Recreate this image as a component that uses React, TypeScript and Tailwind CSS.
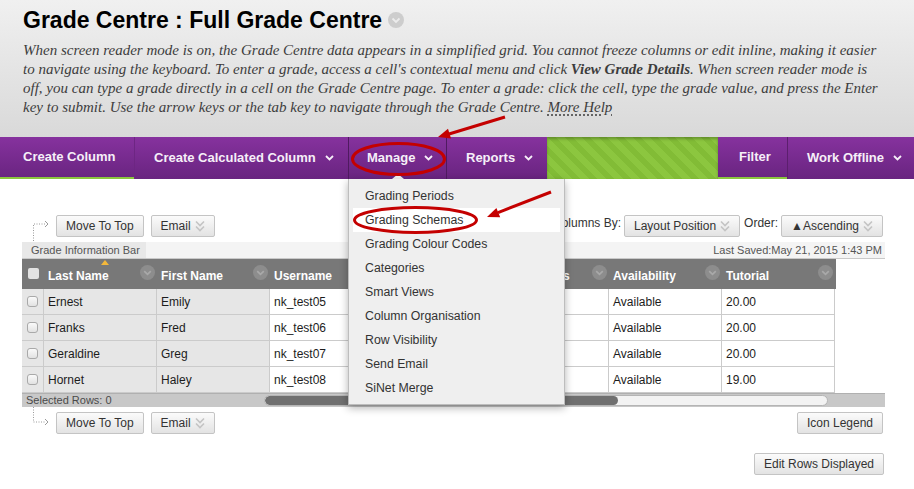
import React from "react";

const Chevron = () => (
  <svg width="9" height="6" viewBox="0 0 9 6" className="ml-[9px] shrink-0">
    <path d="M1 1l3.5 3.5L8 1" stroke="currentColor" strokeWidth="1.8" fill="none" />
  </svg>
);

const DoubleChevron = () => (
  <svg width="10" height="12" viewBox="0 0 10 12" className="shrink-0">
    <path d="M1 1.5l4 4 4-4M1 6.5l4 4 4-4" stroke="#c4c4c4" strokeWidth="1.6" fill="none" />
  </svg>
);

const CircleChevron = ({ bg, stroke, size = 15 }: { bg: string; stroke: string; size?: number }) => (
  <svg width={size} height={size} viewBox="0 0 16 16" className="shrink-0">
    <circle cx="8" cy="8" r="8" fill={bg} />
    <path d="M4.5 6.5L8 10l3.5-3.5" stroke={stroke} strokeWidth="1.8" fill="none" />
  </svg>
);

const Button = ({ label, menu }: { label: string; menu?: boolean }) => (
  <button className="h-[22px] flex items-center gap-[4px] px-[9px] border border-[#c4c4c4] rounded-[2px] bg-gradient-to-b from-[#fbfbfb] to-[#e3e3e3] text-[12px] text-[#333] leading-none">
    {label}
    {menu && <DoubleChevron />}
  </button>
);

// Student ID sits under the open menu, so its heading is left blank
const columns = ["Last Name", "First Name", "Username", "", "Last Access", "Availability", "Tutorial"];

const rows = [
  ["Ernest", "Emily", "nk_test05", "", "", "Available", "20.00"],
  ["Franks", "Fred", "nk_test06", "", "", "Available", "20.00"],
  ["Geraldine", "Greg", "nk_test07", "", "", "Available", "20.00"],
  ["Hornet", "Haley", "nk_test08", "", "", "Available", "19.00"],
];

const menuItems = [
  "Grading Periods",
  "Grading Schemas",
  "Grading Colour Codes",
  "Categories",
  "Smart Views",
  "Column Organisation",
  "Row Visibility",
  "Send Email",
  "SiNet Merge",
];

const Checkbox = ({ header }: { header?: boolean }) => (
  <div
    className={
      header
        ? "w-[11px] h-[11px] rounded-[2px] bg-[#e2e2e2]"
        : "w-[11px] h-[11px] rounded-[3px] border border-[#a9a9a9] bg-gradient-to-b from-[#fafafa] to-[#e2e2e2]"
    }
  />
);

const App: React.FC = () => {
  return (
    <div className="relative w-[914px] h-[489px] overflow-hidden bg-white font-['Liberation_Sans',Arial,sans-serif]">
      {/* page header */}
      <div className="h-[137px] px-[23px] pt-[7px] bg-gradient-to-b from-[#f0f0f0] to-[#d9d9d9]">
        <h1 className="flex items-center text-[23px] leading-[26px] font-bold text-black">
          Grade Centre : Full Grade Centre
          <span className="ml-[6px]">
            <CircleChevron bg="#cdcdcd" stroke="#ececec" size={16} />
          </span>
        </h1>
        <p className="mt-[8px] font-['Liberation_Serif','Times_New_Roman',serif] italic text-[15px] leading-[19px] text-[#3d3d3d] whitespace-nowrap">
          <span className="block">
            When screen reader mode is on, the Grade Centre data appears in a simplified grid. You cannot freeze columns or edit inline, making it easier
          </span>
          <span className="block">
            to navigate using the keyboard. To enter a grade, access a cell's contextual menu and click <b>View Grade Details</b>. When screen reader mode is
          </span>
          <span className="block">
            off, you can type a grade directly in a cell on the Grade Centre page. To enter a grade: click the cell, type the grade value, and press the Enter
          </span>
          <span className="block">
            key to submit. Use the arrow keys or the tab key to navigate through the Grade Centre.{" "}
            <span className="underline decoration-dotted underline-offset-[3px]">More Help</span>
          </span>
        </p>
      </div>

      {/* action bar */}
      <div className="relative z-10 flex h-[42px] bg-gradient-to-b from-[#86329e] to-[#692480] text-[13px] font-bold text-[#f6eff8]">
        <div className="w-[134px] flex items-center pl-[23px] border-b-2 border-[#8cc63f]">Create Column</div>
        <div className="w-[214px] flex items-center pl-[19px] border-l border-[#6d2683]">
          Create Calculated Column <Chevron />
        </div>
        <div className="relative w-[99px] flex items-center pl-[18px] border-l border-r border-[#4f1a60]">
          Manage <Chevron />
          <div className="absolute bottom-0 left-1/2 -translate-x-1/2 w-0 h-0 border-l-[6px] border-r-[6px] border-b-[5px] border-l-transparent border-r-transparent border-b-[#f2f2f2]" />
          <div className="absolute top-full left-[-1px] w-[217px] pt-[5px] pb-[4px] px-[4px] bg-[#efefef] border border-t-0 border-[#bdbdbd] shadow-[0_3px_8px_rgba(0,0,0,0.3)] font-normal">
            {menuItems.map((item) => (
              <div
                key={item}
                className={`h-[24px] flex items-center pl-[12px] text-[12.3px] text-[#333] ${item === "Grading Schemas" ? "bg-white" : ""}`}
              >
                {item}
              </div>
            ))}
          </div>
        </div>
        <div className="w-[100px] flex items-center pl-[19px]">
          Reports <Chevron />
        </div>
        <div className="w-[171px] bg-[repeating-linear-gradient(45deg,#8cc63f_0px,#8cc63f_6px,#82bc36_6px,#82bc36_12px)] shadow-[inset_0_2px_3px_rgba(0,0,0,0.25)]" />
        <div className="w-[69px] flex items-center pl-[21px] border-b-2 border-[#8cc63f]">Filter</div>
        <div className="w-[127px] flex items-center pl-[19px] border-l border-[#5c1f6e]">
          Work Offline <Chevron />
        </div>
      </div>

      {/* grade centre */}
      <div className="pl-[22px] pr-[29px]">
        <div className="mt-[36px] flex items-start justify-between">
          <div className="flex items-center">
            <svg width="18" height="22" viewBox="0 0 18 22" className="ml-[10px] mr-[6px] overflow-visible">
              <path d="M1.5 26V9H14" stroke="#9a9a9a" strokeWidth="1" strokeDasharray="1 1.5" fill="none" />
              <path d="M13 6l3 3-3 3" stroke="#9a9a9a" strokeWidth="1" fill="none" />
            </svg>
            <div className="flex gap-[7px]">
              <Button label="Move To Top" />
              <Button label="Email" menu />
            </div>
          </div>
          <div className="flex items-start mr-[2px] text-[12px] text-[#333]">
            <span className="leading-[16px] mr-[3px]">Sort Columns By:</span>
            <Button label="Layout Position" menu />
            <span className="leading-[16px] ml-[4px] mr-[3px]">Order:</span>
            <Button label="▲Ascending" menu />
          </div>
        </div>

        {/* grade information bar */}
        <div className="mt-[5px] flex h-[17px] border-b border-[#c9c9c9] text-[11px] text-[#555]">
          <div className="w-[124px] flex items-center pl-[9px] bg-[#e8e8e8]">Grade Information Bar</div>
          <div className="flex-1 flex items-center justify-end pr-[3px] bg-[#f4f4f4]">Last Saved:May 21, 2015 1:43 PM</div>
        </div>

        {/* table */}
        <div className="w-[814px]">
          <div className="grid grid-cols-[22px_repeat(7,113px)] h-[30px] bg-[#787878] text-[12px] font-bold text-white">
            <div className="flex justify-center pt-[9px] pl-[1px]">
              <Checkbox header />
            </div>
            {columns.map((c, i) => (
              <div key={i} className="relative pl-[4px] pt-[9px] leading-[16px]">
                {c}
                {i === 0 && (
                  <div className="absolute top-[1px] left-[57px] w-0 h-0 border-l-[4px] border-r-[4px] border-b-[5px] border-l-transparent border-r-transparent border-b-[#f4b83a]" />
                )}
                <div className="absolute top-[6px] right-[2px]">
                  <CircleChevron bg="#8d8d8d" stroke="#a9a9a9" />
                </div>
              </div>
            ))}
          </div>
          {rows.map((r) => (
            <div key={r[0]} className="grid grid-cols-[22px_repeat(7,113px)] h-[26px] text-[12px] text-[#1c1c1c]">
              <div className="flex items-center justify-center bg-[#e6e6e6] border-b border-r border-[#cbcbcb]">
                <Checkbox />
              </div>
              {r.map((v, i) => (
                <div
                  key={i}
                  className={`flex items-center pl-[4px] border-b border-r border-[#cbcbcb] ${i < 2 ? "bg-[#e6e6e6]" : "bg-white"}`}
                >
                  {v}
                </div>
              ))}
            </div>
          ))}
        </div>

        {/* footer bar */}
        <div className="flex items-center h-[14px] bg-[#c8c8c8] border-t border-[#b0b0b0] text-[11px] text-[#4a4a4a]">
          <div className="w-[242px] pl-[4px] leading-none">Selected Rows: 0</div>
          <div className="flex w-[564px] h-[11px] rounded-full bg-[#f3f3f3] border border-[#b5b5b5] overflow-hidden">
            <div className="w-[353px] h-full rounded-full bg-[#707070]" />
          </div>
        </div>

        <div className="mt-[5px] flex items-start justify-between">
          <div className="flex items-center">
            <svg width="18" height="22" viewBox="0 0 18 22" className="ml-[10px] mr-[6px] overflow-visible">
              <path d="M1.5 -5V10H14" stroke="#9a9a9a" strokeWidth="1" strokeDasharray="1 1.5" fill="none" />
              <path d="M13 7l3 3-3 3" stroke="#9a9a9a" strokeWidth="1" fill="none" />
            </svg>
            <div className="flex gap-[7px]">
              <Button label="Move To Top" />
              <Button label="Email" menu />
            </div>
          </div>
          <div className="mr-[2px]">
            <Button label="Icon Legend" />
          </div>
        </div>

        <div className="mt-[19px] flex justify-end mr-[1px]">
          <Button label="Edit Rows Displayed" />
        </div>
      </div>

      {/* annotations */}
      <svg className="absolute inset-0 z-20 pointer-events-none" width="914" height="489" viewBox="0 0 914 489">
        <g stroke="#c40000" strokeWidth="3" fill="none">
          <ellipse cx="398.5" cy="159" rx="46" ry="15.5" />
          <ellipse cx="415.5" cy="220" rx="61" ry="12.5" />
          <line x1="505" y1="117" x2="449" y2="134" />
          <line x1="551" y1="192" x2="498" y2="212.6" />
        </g>
        <g fill="#c40000">
          <polygon points="438,137 451,138.6 448,128.8" />
          <polygon points="487,217 500.2,217.3 496.4,207.9" />
        </g>
      </svg>
    </div>
  );
};

export default App;
